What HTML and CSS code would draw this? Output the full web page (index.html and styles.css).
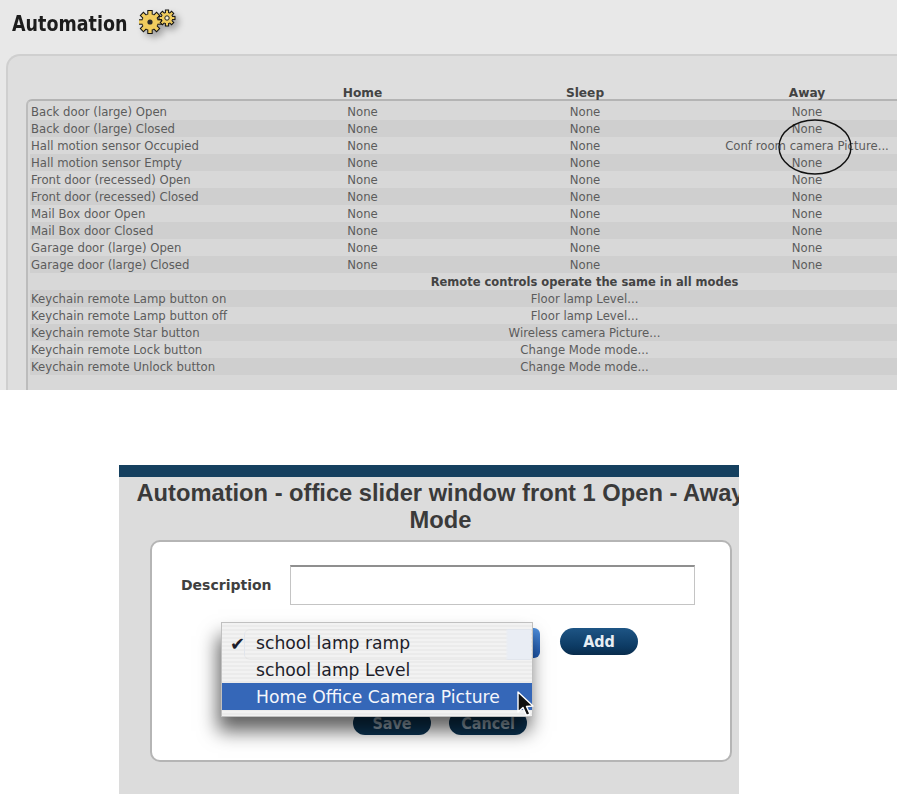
FILE: index.html
```html
<!DOCTYPE html>
<html lang="en">
<head>
    <meta charset="UTF-8">
    <title>Automation</title>
    <link rel="stylesheet" href="styles.css">
</head>
<body>

    <!-- Top shot: automation table -->
    <section class="shot-top">
        <div class="page-title">
            <h1>Automation</h1>
            <svg class="gears" width="40" height="30" viewBox="0 0 40 30">
                <!-- large gear -->
                <circle cx="11" cy="13" r="8.6" fill="#111"></circle>
                <g fill="#f0cc5e" stroke="#111" stroke-width="1">
                    <rect x="8.8" y="1.5" width="4.4" height="23"></rect>
                    <rect x="8.8" y="1.5" width="4.4" height="23" transform="rotate(45 11 13)"></rect>
                    <rect x="8.8" y="1.5" width="4.4" height="23" transform="rotate(90 11 13)"></rect>
                    <rect x="8.8" y="1.5" width="4.4" height="23" transform="rotate(135 11 13)"></rect>
                </g>
                <circle cx="11" cy="13" r="7.8" fill="#f0cc5e"></circle>
                <circle cx="11" cy="13" r="2.6" fill="#2a2a2a"></circle>
                <!-- small gear -->
                <circle cx="28" cy="9" r="6" fill="#111"></circle>
                <g fill="#f0cc5e" stroke="#111" stroke-width="1">
                    <rect x="26.4" y="1" width="3.2" height="16"></rect>
                    <rect x="26.4" y="1" width="3.2" height="16" transform="rotate(45 28 9)"></rect>
                    <rect x="26.4" y="1" width="3.2" height="16" transform="rotate(90 28 9)"></rect>
                    <rect x="26.4" y="1" width="3.2" height="16" transform="rotate(135 28 9)"></rect>
                </g>
                <circle cx="28" cy="9" r="5.3" fill="#f0cc5e"></circle>
                <circle cx="28" cy="9" r="2.2" fill="#f6efcf" stroke="#222" stroke-width="1"></circle>
            </svg>
        </div>

        <div class="panel">
            <div class="cols">
                <span></span>
                <span>Home</span>
                <span>Sleep</span>
                <span>Away</span>
            </div>
            <div class="rules">
                <div class="row"><span>Back door (large) Open</span><span>None</span><span>None</span><span>None</span></div>
                <div class="row"><span>Back door (large) Closed</span><span>None</span><span>None</span><span>None</span></div>
                <div class="row"><span>Hall motion sensor Occupied</span><span>None</span><span>None</span><span>Conf room camera Picture...</span></div>
                <div class="row"><span>Hall motion sensor Empty</span><span>None</span><span>None</span><span>None</span></div>
                <div class="row"><span>Front door (recessed) Open</span><span>None</span><span>None</span><span>None</span></div>
                <div class="row"><span>Front door (recessed) Closed</span><span>None</span><span>None</span><span>None</span></div>
                <div class="row"><span>Mail Box door Open</span><span>None</span><span>None</span><span>None</span></div>
                <div class="row"><span>Mail Box door Closed</span><span>None</span><span>None</span><span>None</span></div>
                <div class="row"><span>Garage door (large) Open</span><span>None</span><span>None</span><span>None</span></div>
                <div class="row"><span>Garage door (large) Closed</span><span>None</span><span>None</span><span>None</span></div>
                <div class="row"><span></span><span class="wide note">Remote controls operate the same in all modes</span></div>
                <div class="row"><span>Keychain remote Lamp button on</span><span class="wide">Floor lamp Level...</span></div>
                <div class="row"><span>Keychain remote Lamp button off</span><span class="wide">Floor lamp Level...</span></div>
                <div class="row"><span>Keychain remote Star button</span><span class="wide">Wireless camera Picture...</span></div>
                <div class="row"><span>Keychain remote Lock button</span><span class="wide">Change Mode mode...</span></div>
                <div class="row"><span>Keychain remote Unlock button</span><span class="wide">Change Mode mode...</span></div>
            </div>
        </div>

        <svg class="circled" width="76" height="58" viewBox="0 0 76 58">
            <ellipse cx="38" cy="29" rx="36" ry="27" fill="none" stroke="#111" stroke-width="1.4"></ellipse>
        </svg>
    </section>

    <!-- Bottom shot: rule dialog -->
    <section class="dialog">
        <div class="dialog-bar"></div>
        <h2>Automation - office slider window front 1 Open - Away Mode</h2>

        <div class="form-box">
            <div class="field">
                <label>Description</label>
                <div class="text-input"></div>
            </div>

            <div class="action-row">
                <div class="select-stub"></div>
                <button class="pill">Add</button>
            </div>

            <div class="save-row">
                <button class="pill">Save</button>
                <button class="pill">Cancel</button>
            </div>

            <ul class="menu">
                <li><span class="check">&#10004;</span>school lamp ramp</li>
                <li>school lamp Level</li>
                <li class="picked">Home Office Camera Picture</li>
            </ul>

            <svg class="pointer" width="20" height="30" viewBox="0 0 20 30">
                <path d="M3 2 L3 22 L8 17.5 L11.5 25.5 L15 24 L11.5 16.5 L18 16 Z" fill="#111" stroke="#fff" stroke-width="1.4" stroke-linejoin="round"></path>
            </svg>
        </div>
    </section>

</body>
</html>
```

FILE: styles.css
```css
* {
    margin: 0;
    padding: 0;
    box-sizing: border-box;
}

html, body {
    height: 794px;
    overflow: hidden;
}

body {
    background: #fff;
    font-family: 'DejaVu Sans', sans-serif;
}

/* Top shot */
.shot-top {
    position: relative;
    height: 390px;
    background: #e8e8e8;
    overflow: hidden;
    padding: 10px 0 0 6px;
}

.page-title {
    display: flex;
    align-items: flex-start;
    height: 44px;
    padding-left: 6px;
}

.page-title h1 {
    margin-right: -26px;
    font-size: 21.5px;
    line-height: 27px;
    font-weight: 700;
    color: #1c1c1c;
    transform: scaleX(0.815);
    transform-origin: left center;
}

.gears {
    margin: -1px 0 0 11px;
    filter: drop-shadow(4px 4px 3px rgba(0, 0, 0, 0.3));
}

.panel {
    width: 1000px;
    height: 340px;
    padding: 28px 0 0 18px;
    background: #dedede;
    border: 2px solid #cfcfcf;
    border-radius: 14px 0 0 0;
    border-bottom: none;
}

.cols, .row {
    display: grid;
    grid-template-columns: 221px 223px 222px 222px;
    font-size: 11.7px;
    text-align: center;
}

.cols {
    height: 15px;
    padding-left: 4px;
    font-size: 12.2px;
    font-weight: 700;
    color: #444;
    line-height: 18px;
}

.rules {
    border-top: 2px solid #b4b4b4;
    border-left: 2px solid #bcbcbc;
    border-radius: 6px 0 0 0;
    padding: 2px 0 0 2px;
    height: 293px;
    background: #d8d8d8;
}

.row {
    height: 17px;
    line-height: 19px;
    color: #5c5c5c;
    white-space: nowrap;
}

.row:nth-child(even) {
    background: #cfcfcf;
}

.row span:first-child {
    text-align: left;
    padding-left: 1px;
}

.row .wide {
    grid-column: 2 / 5;
}

.row .note {
    font-size: 11.5px;
    font-weight: 700;
    color: #444;
}

.circled {
    position: absolute;
    left: 777px;
    top: 118px;
}

/* Bottom shot */
.dialog {
    width: 620px;
    height: 329px;
    margin: 75px 0 0 119px;
    background: #dcdcdc;
    overflow: hidden;
}

.dialog-bar {
    height: 12px;
    background: #15405f;
}

.dialog h2 {
    width: 643px;
    font-family: 'Liberation Sans', sans-serif;
    font-size: 23.7px;
    line-height: 27px;
    font-weight: 700;
    text-align: center;
    color: #3a3a3a;
    margin-top: 3px;
}

.form-box {
    position: relative;
    width: 582px;
    height: 222px;
    margin: 6px 0 0 31px;
    background: #fff;
    border: 2px solid #b5b5b5;
    border-radius: 10px;
}

.field {
    display: flex;
    align-items: center;
    padding: 23px 0 0 29px;
}

.field label {
    width: 109px;
    font-size: 14px;
    font-weight: 700;
    color: #3f3f3f;
}

.text-input {
    width: 405px;
    height: 40px;
    border: 1px solid #c4c4c4;
    border-top: 2px solid #8f8f8f;
}

.action-row {
    display: flex;
    gap: 20px;
    align-items: flex-start;
    padding: 23px 0 0 300px;
}

.select-stub {
    width: 88px;
    height: 30px;
    border-radius: 6px;
    background: linear-gradient(to bottom, #4f8fdc, #1c55ab);
}

.pill {
    width: 78px;
    height: 27px;
    border: none;
    border-radius: 14px;
    background: linear-gradient(to bottom, #1e5585, #0c3a63 70%, #092c4c);
    color: #e6edf3;
    font-family: 'DejaVu Sans', sans-serif;
    font-size: 16px;
    font-stretch: condensed;
    font-weight: 700;
}

.save-row {
    display: flex;
    gap: 18px;
    padding: 53px 0 0 201px;
}

.save-row .pill {
    height: 24px;
    background: #0b3352;
    color: #93a5b3;
}

.menu {
    position: absolute;
    left: 69px;
    top: 80px;
    width: 312px;
    height: 95px;
    padding-top: 6px;
    list-style: none;
    background: repeating-linear-gradient(to bottom, #f2f2f2 0, #f2f2f2 2px, #ebebeb 2px, #ebebeb 4px);
    border: 1px solid #c0c0c0;
    box-shadow: -3px 14px 18px rgba(0, 0, 0, 0.62);
    font-size: 17.2px;
    color: #1d1d2a;
}

/* the select shows faintly through the menu */
.menu::before {
    content: '';
    position: absolute;
    left: 22px;
    right: 0;
    top: 6px;
    height: 29px;
    background: linear-gradient(to right, transparent 91%, #e9edf4 92%);
    border: 1px solid rgba(0, 0, 0, 0.03);
    border-radius: 6px 0 0 6px;
}

.menu li {
    position: relative;
    height: 27px;
    line-height: 29px;
    padding-left: 34px;
    white-space: nowrap;
}

.menu .check {
    position: absolute;
    left: 8px;
    font-size: 18px;
}

.menu .picked {
    background: #3567b8;
    color: #f4f6fb;
}

.pointer {
    position: absolute;
    left: 363px;
    top: 148px;
}
```
